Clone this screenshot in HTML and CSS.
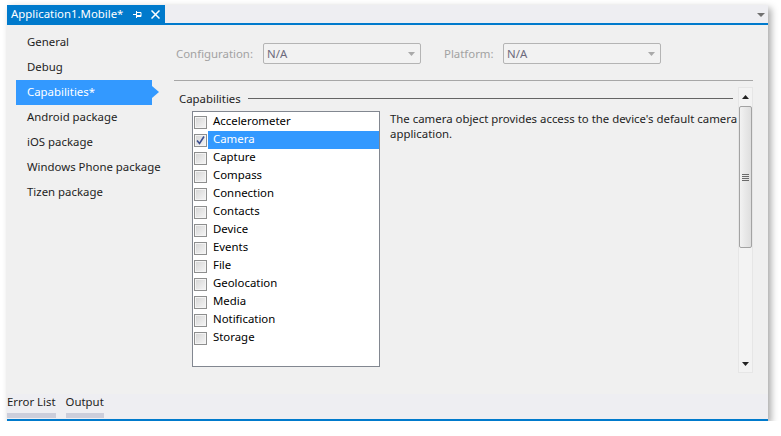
FILE: index.html
```html
<!DOCTYPE html>
<html>
<head>
<meta charset="utf-8">
<link rel="stylesheet" href="styles.css">
</head>
<body>
<div class="window">
  <div class="tabbar">
    <div class="doc-tab">
      <span class="doc-title">Application1.Mobile*</span>
      <svg class="pin" width="9" height="9" viewBox="0 0 9 9"><path d="M0 4.5H3M3.5 1V8M3.5 2.5H8V6.5H3.5M3.5 5.5H8" stroke="#fff" stroke-width="1" fill="none"/></svg>
      <svg class="close" width="9" height="9" viewBox="0 0 9 9"><path d="M0.5 0.5L8.5 8.5M8.5 0.5L0.5 8.5" stroke="#fff" stroke-width="1.5"/></svg>
    </div>
    <div class="tab-spacer"></div>
    <svg class="overflow" width="8" height="4" viewBox="0 0 8 4"><path d="M0 0H8L4 4Z" fill="#717171"/></svg>
  </div>
  <div class="main">
    <nav class="nav">
      <div class="nav-item">General</div>
      <div class="nav-item">Debug</div>
      <div class="nav-item selected">Capabilities*</div>
      <div class="nav-item">Android package</div>
      <div class="nav-item">iOS package</div>
      <div class="nav-item">Windows Phone package</div>
      <div class="nav-item">Tizen package</div>
    </nav>
    <section class="page">
      <div class="config-row">
        <span class="cfg-label cfg-config">Configuration:</span>
        <div class="combo"><span>N/A</span><svg width="7" height="4" viewBox="0 0 7 4"><path d="M0 0H7L3.5 4Z" fill="#a9a9a9"/></svg></div>
        <span class="cfg-label cfg-platform">Platform:</span>
        <div class="combo"><span>N/A</span><svg width="7" height="4" viewBox="0 0 7 4"><path d="M0 0H7L3.5 4Z" fill="#a9a9a9"/></svg></div>
      </div>
      <div class="separator"></div>
      <div class="scroll-area">
        <div class="scroll-content">
          <div class="group-header"><span>Capabilities</span><div class="group-line"></div></div>
          <div class="cap-body">
            <div class="cap-list">
              <div class="cap-row"><span class="chk"></span><span class="cap-name">Accelerometer</span></div>
              <div class="cap-row"><span class="chk"><svg width="11" height="11" viewBox="0 0 11 11"><path d="M2 5.5L4.5 8.5L9 1.5" stroke="#3c4f8f" stroke-width="1.6" fill="none"/></svg></span><span class="cap-name selected">Camera</span></div>
              <div class="cap-row"><span class="chk"></span><span class="cap-name">Capture</span></div>
              <div class="cap-row"><span class="chk"></span><span class="cap-name">Compass</span></div>
              <div class="cap-row"><span class="chk"></span><span class="cap-name">Connection</span></div>
              <div class="cap-row"><span class="chk"></span><span class="cap-name">Contacts</span></div>
              <div class="cap-row"><span class="chk"></span><span class="cap-name">Device</span></div>
              <div class="cap-row"><span class="chk"></span><span class="cap-name">Events</span></div>
              <div class="cap-row"><span class="chk"></span><span class="cap-name">File</span></div>
              <div class="cap-row"><span class="chk"></span><span class="cap-name">Geolocation</span></div>
              <div class="cap-row"><span class="chk"></span><span class="cap-name">Media</span></div>
              <div class="cap-row"><span class="chk"></span><span class="cap-name">Notification</span></div>
              <div class="cap-row"><span class="chk"></span><span class="cap-name">Storage</span></div>
            </div>
            <p class="cap-desc">The camera object provides access to the device's default camera application.</p>
          </div>
        </div>
        <div class="vscroll">
          <div class="sb-btn"><svg width="7" height="4" viewBox="0 0 7 4"><path d="M0 4H7L3.5 0Z" fill="#222"/></svg></div>
          <div class="sb-thumb"><svg width="7" height="7" viewBox="0 0 7 7"><path d="M0 0.5H7M0 2.5H7M0 4.5H7M0 6.5H7" stroke="#6a6a6a" stroke-width="1"/></svg></div>
          <div class="sb-track"></div>
          <div class="sb-btn"><svg width="7" height="4" viewBox="0 0 7 4"><path d="M0 0H7L3.5 4Z" fill="#222"/></svg></div>
        </div>
      </div>
    </section>
  </div>
  <div class="bottom-tabs">
    <div class="btab"><span class="btab-label">Error List</span><div class="btab-bar"></div></div>
    <div class="btab"><span class="btab-label">Output</span><div class="btab-bar"></div></div>
  </div>
</div>
</body>
</html>
```

FILE: styles.css
```css
* { box-sizing: border-box; }
html, body { margin: 0; padding: 0; background: #ffffff; }
body {
  font-family: "Noto Sans", "Open Sans", sans-serif;
  font-size: 11.4px;
  color: #1e1e1e;
}
.window {
  margin: 5px 0 0 7px;
  width: 761px;
  height: 416px;
  background: #f0f0f0;
  border-bottom: 2px solid #007acc;
  box-shadow: 3px 3px 7px rgba(0,0,0,0.35);
  display: flex;
  flex-direction: column;
}
.tabbar {
  height: 20px;
  flex: none;
  display: flex;
  align-items: flex-start;
  background: #eeeef2;
  border-bottom: 2px solid #007acc;
}
.doc-tab {
  width: 158px;
  height: 18px;
  background: #007acc;
  color: #fff;
  display: flex;
  align-items: center;
  padding: 0 5px 0 4px;
}
.doc-title { flex: 1; line-height: 18px; white-space: nowrap; }
.pin { margin-right: 9px; }
.tab-spacer { flex: 1; }
.overflow { margin: 8px 3px 0 0; }

.main { flex: 1; display: flex; min-height: 0; }
.nav {
  width: 167px;
  flex: none;
  padding-top: 5px;
}
.nav-item {
  position: relative;
  margin-left: 9px;
  width: 136px;
  height: 25px;
  line-height: 23px;
  padding-left: 11px;
  white-space: nowrap;
}
.nav-item.selected { background: #3399ff; color: #fff; }
.nav-item.selected::after {
  content: "";
  position: absolute;
  right: -7px;
  top: 6px;
  border-left: 7px solid #3399ff;
  border-top: 6.5px solid transparent;
  border-bottom: 6.5px solid transparent;
}

.page {
  flex: 1;
  padding: 18px 15px 0 0;
  display: flex;
  flex-direction: column;
}
.config-row { display: flex; align-items: center; height: 21px; }
.cfg-label { color: #a2a2a2; white-space: nowrap; flex: none; }
.cfg-config { width: 89px; padding-left: 2px; }
.cfg-platform { width: 59px; margin-left: 23px; }
.combo {
  width: 158px;
  height: 21px;
  flex: none;
  border: 1px solid #b4b4b4;
  border-radius: 2px;
  background: #f2f2f2;
  display: flex;
  align-items: center;
  justify-content: space-between;
  padding: 0 5px 0 3px;
  color: #6c6a7c;
}
.separator { height: 1px; background: #a7a7a7; margin-top: 16px; }

.scroll-area { margin-top: 6px; height: 286px; display: flex; }
.scroll-content { flex: 1; padding-left: 5px; }
.group-header {
  margin-top: 3px;
  height: 16px;
  display: flex;
  align-items: center;
  gap: 7px;
  padding-right: 5px;
}
.group-line { flex: 1; height: 1px; background: #646464; }
.cap-body { display: flex; margin-top: 5px; padding-left: 13px; }
.cap-list {
  width: 188px;
  height: 256px;
  flex: none;
  background: #fff;
  border: 1px solid #828790;
  padding: 1px 0 0 1px;
  color: #000;
}
.cap-row { display: flex; align-items: center; height: 18px; }
.chk {
  width: 13px;
  height: 13px;
  flex: none;
  border: 1px solid #8e8f8f;
  background: linear-gradient(135deg, #d4d4d4, #f6f6f6);
  box-shadow: inset 0 0 0 1px #f4f4f4;
  display: flex;
  align-items: center;
  justify-content: center;
}
.cap-name {
  flex: 1;
  height: 18px;
  line-height: 16px;
  margin-left: 1px;
  padding: 0 0 2px 5px;
}
.cap-name.selected { background: #3399ff; color: #fff; }
.cap-desc {
  margin: 0 0 0 10px;
  line-height: 15px;
  padding-top: 0;
  flex: 1;
}

.vscroll {
  width: 15px;
  flex: none;
  display: flex;
  flex-direction: column;
  background: #f3f3f3;
  border: 1px solid #e6e6e6;
}
.sb-btn { height: 17px; display: flex; align-items: center; justify-content: center; }
.sb-thumb {
  height: 142px;
  margin: 1px 0 0 0;
  border: 1px solid #a3a3a3;
  border-radius: 2px;
  background: linear-gradient(90deg, #f2f2f2, #dedede);
  display: flex;
  align-items: center;
  justify-content: center;
}
.sb-track { flex: 1; }

.bottom-tabs {
  height: 25px;
  flex: none;
  display: flex;
  gap: 10px;
  background: #eeeef2;
}
.btab { display: flex; flex-direction: column; }
.btab-label { line-height: 16px; height: 16px; color: #1e1e1e; white-space: nowrap; }
.btab-bar { height: 5px; margin-top: 3px; background: #cccedb; }
```
